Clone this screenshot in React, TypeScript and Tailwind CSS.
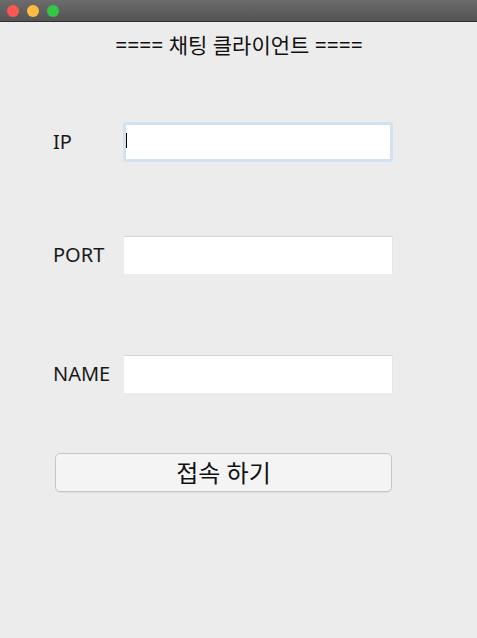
import React from "react";

const font = { fontFamily: '"Noto Sans", "Noto Sans CJK KR", sans-serif' };

function Field({ label, focused, top }: { label: string; focused?: boolean; top: string }) {
  return (
    <div className={`flex items-center ${top}`}>
      <div className="w-[123px] pl-[53px] text-[20px] leading-none text-[#1a1a1a] shrink-0">
        {label}
      </div>
      {focused ? (
        <div className="w-[270px] h-[40px] rounded-[3px] border-[3px] border-[#d2e2f0] bg-white relative">
          <div className="absolute left-[0px] top-[8px] w-[1px] h-[15px] bg-black" />
        </div>
      ) : (
        <div className="ml-[1px] w-[269px] h-[38px] bg-white border-t border-[#d4d4d4] border-r border-r-[#e6e6e6]" />
      )}
    </div>
  );
}

export default function App() {
  return (
    <div className="w-[477px] h-[638px] bg-[#ececec] flex flex-col" style={font}>
      <div className="h-[22px] shrink-0 bg-gradient-to-b from-[#6c6c6c] to-[#545454] border-b border-[#2e2e2e] flex items-center gap-[8px] pl-[7px]">
        <div className="w-[12px] h-[12px] rounded-full bg-[#fc5753]" />
        <div className="w-[12px] h-[12px] rounded-full bg-[#fdbc40]" />
        <div className="w-[12px] h-[12px] rounded-full bg-[#33c748]" />
      </div>
      <div className="mt-[11px] h-[24px] leading-[24px] text-center text-[21px] text-[#111] pl-[1px]">
        ==== 채팅 클라이언트 ====
      </div>
      <div className="flex flex-col">
        <Field label="IP" focused top="mt-[65px]" />
        <Field label="PORT" top="mt-[74px]" />
        <Field label="NAME" top="mt-[81px]" />
      </div>
      <div className="mt-[60px] ml-[55px] w-[337px] h-[39px] rounded-[5px] border border-[#c6c6c6] bg-[#f4f4f4] flex items-center justify-center text-[24px] text-[#111] leading-none shadow-[0_1px_0_rgba(0,0,0,0.05)]">
        접속 하기
      </div>
    </div>
  );
}
